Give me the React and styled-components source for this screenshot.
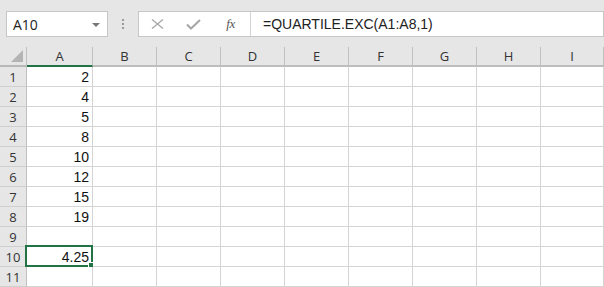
import styled, { createGlobalStyle } from "styled-components";

const GlobalStyle = createGlobalStyle`
  html, body {
    margin: 0;
    padding: 0;
    background: #e6e6e6;
  }
  * {
    box-sizing: border-box;
  }
`;

const Page = styled.div`
  width: 604px;
  height: 287px;
  overflow: hidden;
  background: #e6e6e6;
  display: flex;
  flex-direction: column;
  font-family: "Open Sans", "Liberation Sans", sans-serif;
`;

const Toolbar = styled.div`
  height: 47px;
  display: flex;
  align-items: flex-start;
  padding: 11px 0 0 6px;
`;

const NameBox = styled.div`
  width: 102px;
  height: 26px;
  background: #fff;
  border: 1px solid #c6c6c6;
  display: flex;
  align-items: center;
  justify-content: space-between;
  padding: 0 7px 0 6px;
  font-size: 14px;
  color: #222;
`;

const DropArrow = styled.span`
  width: 0;
  height: 0;
  border-left: 4px solid transparent;
  border-right: 4px solid transparent;
  border-top: 4px solid #777;
  margin-top: 1px;
`;

const Grip = styled.div`
  width: 30px;
  height: 26px;
  display: flex;
  flex-direction: column;
  align-items: center;
  justify-content: center;
  gap: 2px;
`;

const Dot = styled.span`
  width: 2px;
  height: 2px;
  background: #9a9a9a;
`;

const FormulaBox = styled.div`
  flex: 1;
  height: 26px;
  background: #fff;
  border: 1px solid #c6c6c6;
  display: flex;
  align-items: center;
`;

const IconSlot = styled.div`
  width: ${(p) => p.$w}px;
  height: 24px;
  display: flex;
  align-items: center;
  justify-content: center;
`;

const Fx = styled.span`
  font-family: "Liberation Serif", "DejaVu Serif", serif;
  font-style: italic;
  font-size: 13px;
  color: #555;
  letter-spacing: -0.5px;
`;

const Divider = styled.span`
  width: 1px;
  height: 24px;
  background: #d4d4d4;
`;

const FormulaText = styled.span`
  padding-left: 12px;
  font-family: "Liberation Sans", Arial, sans-serif;
  font-size: 14px;
  color: #222;
`;

const Sheet = styled.div`
  display: grid;
  grid-template-columns: 27px 66px repeat(7, 64px) 63px;
  grid-template-rows: 20px repeat(11, 20px);
`;

const Corner = styled.div`
  position: relative;
  border-right: 1px solid #c0c0c0;
  border-bottom: 2px solid #b8b8b8;
  &::after {
    content: "";
    position: absolute;
    right: 3px;
    bottom: 3px;
    width: 0;
    height: 0;
    border-left: 12px solid transparent;
    border-bottom: 12px solid #b4b4b4;
  }
`;

const ColHead = styled.div`
  display: flex;
  align-items: center;
  justify-content: center;
  border-right: 1px solid #c0c0c0;
  border-bottom: 2px solid ${(p) => (p.$active ? "#217346" : "#bdbdbd")};
  font-size: 13px;
  color: #333;
  padding-bottom: 1px;
`;

const RowHead = styled.div`
  display: flex;
  align-items: center;
  justify-content: center;
  background: #e6e6e6;
  border-right: 1px solid #c0c0c0;
  border-bottom: 1px solid #cfcfcf;
  font-size: 13px;
  color: #333;
`;

const Cell = styled.div`
  position: relative;
  background: #fff;
  border-right: 1px solid #d4d4d4;
  border-bottom: 1px solid #d4d4d4;
  display: flex;
  align-items: center;
  justify-content: flex-end;
  padding-right: 3px;
  font-family: "Liberation Sans", Arial, sans-serif;
  font-size: 14px;
  color: #111;

  ${(p) =>
    p.$selected &&
    `
    &::before {
      content: "";
      position: absolute;
      top: -2px;
      left: -2px;
      right: -1px;
      bottom: -1px;
      border: 2px solid #217346;
      pointer-events: none;
    }
    &::after {
      content: "";
      position: absolute;
      right: -3px;
      bottom: -3px;
      width: 6px;
      height: 6px;
      background: #217346;
      outline: 1px solid #fff;
    }
  `}
`;

const columns = ["A", "B", "C", "D", "E", "F", "G", "H", "I"];
const values = [2, 4, 5, 8, 10, 12, 15, 19, "", "4.25", ""];

export default function App() {
  return (
    <>
      <GlobalStyle />
      <Page>
        <Toolbar>
          <NameBox>
            <span>A10</span>
            <DropArrow />
          </NameBox>
          <Grip>
            <Dot />
            <Dot />
            <Dot />
          </Grip>
          <FormulaBox>
            <IconSlot $w={36}>
              <svg width="13" height="10" viewBox="0 0 13 10">
                <path d="M1 0.5 L12 9.5 M12 0.5 L1 9.5" stroke="#a6a6a6" strokeWidth="1.3" fill="none" />
              </svg>
            </IconSlot>
            <IconSlot $w={36}>
              <svg width="15" height="11" viewBox="0 0 15 11">
                <path d="M1 5.5 L5 9.5 L14 1" stroke="#a6a6a6" strokeWidth="2" fill="none" />
              </svg>
            </IconSlot>
            <IconSlot $w={39}>
              <Fx>fx</Fx>
            </IconSlot>
            <Divider />
            <FormulaText>=QUARTILE.EXC(A1:A8,1)</FormulaText>
          </FormulaBox>
        </Toolbar>

        <Sheet>
          <Corner />
          {columns.map((c) => (
            <ColHead key={c} $active={c === "A"}>
              {c}
            </ColHead>
          ))}
          {values.map((v, i) => (
            <Row key={i} n={i + 1} value={v} />
          ))}
        </Sheet>
      </Page>
    </>
  );
}

function Row({ n, value }) {
  return (
    <>
      <RowHead>{n}</RowHead>
      {columns.map((c) => (
        <Cell key={c} $selected={c === "A" && n === 10}>
          {c === "A" ? value : ""}
        </Cell>
      ))}
    </>
  );
}
